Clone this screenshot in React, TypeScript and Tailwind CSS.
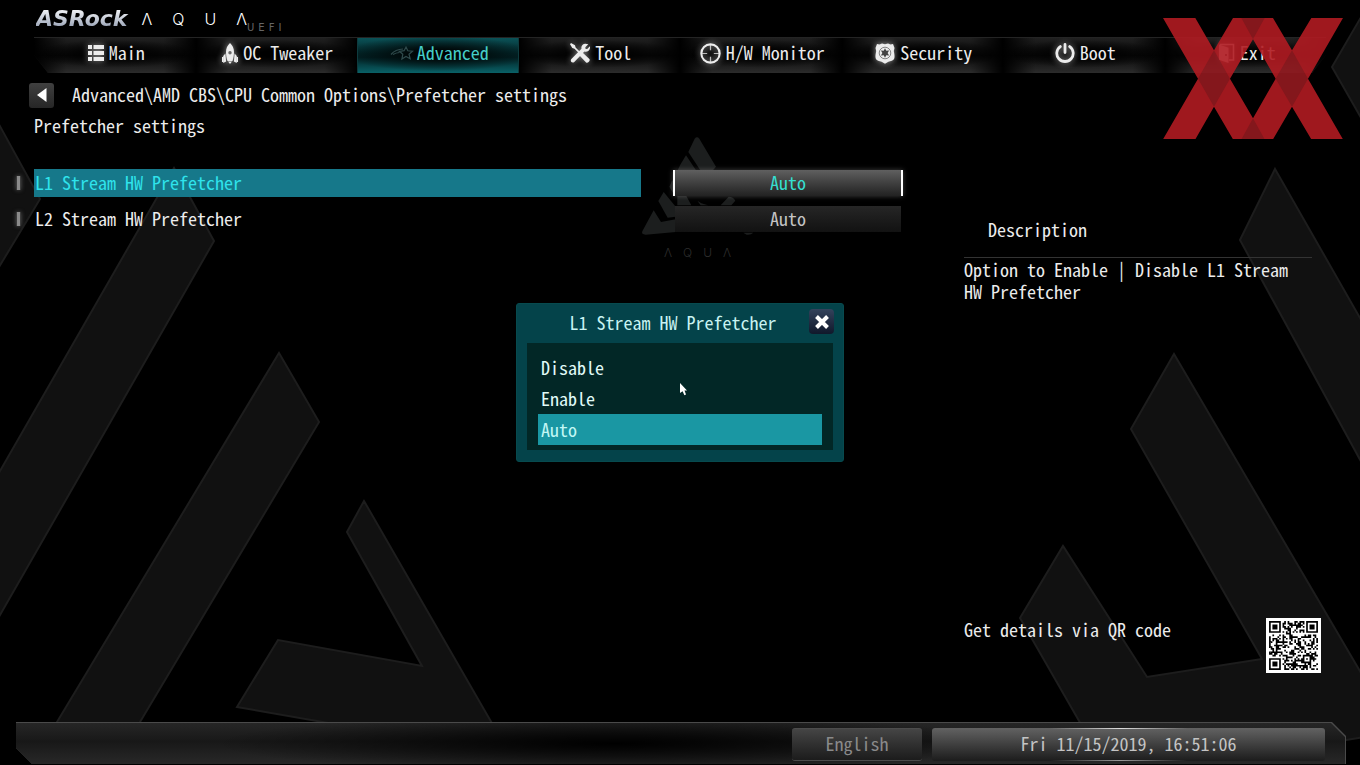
import React from "react";

const ListIcon = () => (
  <svg viewBox="0 0 16 16" className="size-4 fill-current" aria-hidden="true">
    <path d="M0 0h4v4H0zM0 6h4v4H0zM0 12h4v4H0zM5.500 0H16v4H5.500zM5.500 6H16v4H5.500zM5.500 12H16v4H5.500z" />
  </svg>
);

const RocketIcon = () => (
  <svg viewBox="0 0 16 21" className="h-[21px] w-4 fill-current" aria-hidden="true">
    <path
      fillRule="evenodd"
      d="M8 0C10.600 2.400 12 5.600 12 9c0 3-.6 6-1.500 9h-5C4.600 15 4 12 4 9c0-3.400 1.400-6.600 4-9zm0 8a1.700 1.700 0 1 0 0 3.400A1.700 1.700 0 0 0 8 8z"
    />
    <path d="M3.400 10.500L1.200 13v7l2.900-1.500zM12.600 10.500l2.200 2.500v7l-2.900-1.500zM6 18.600h4L8 21z" />
    <path d="M0 14h1.500v5H0zM14.500 14H16v5h-1.500z" />
  </svg>
);

const ShootingStarIcon = () => (
  <svg viewBox="0 0 24 16" className="h-4 w-6 fill-none stroke-[#2f4a4c]" strokeWidth="1.200" aria-hidden="true">
    <path d="M16 2l1.800 3.800 4.700.4-3.500 3 1.200 4.600-4.200-2.400-4.100 2.700.9-4.900-3.300-2.900 4.600-.6z" />
    <path d="M1 9.500C4 6 8 4.200 13 4M3 9.500c2-1.200 4-1.800 6.500-2" />
  </svg>
);

const ToolIcon = () => (
  <svg viewBox="0 0 20 20" className="size-5 fill-current" aria-hidden="true">
    <path d="M1 0l4 2.300.6 2.200 5.200 5.200 1.700-.3 6.900 6.700c1.200 1.600-1.600 4.500-3.300 3.300l-6.600-6.800.3-1.700L4.500 5.700 2.300 5 0 1.200z" />
    <path d="M18.300 1.300l-3 3 .3 1.600 1.600.2 2.700-2.800c.8 4-2.500 6.200-5.500 5.300L4.300 18.900c-2 2-4.800-.7-2.900-2.800L11.500 5.800C10.700 2.300 13.600-.7 18.300 1.300z" />
  </svg>
);

const CrosshairIcon = () => (
  <svg viewBox="0 0 22 22" className="size-[21px] fill-none stroke-current" aria-hidden="true">
    <circle cx="11" cy="11" r="9.600" strokeWidth="2.200" />
    <path d="M11 2v5.500M11 14.500V20M2 11h5.500M14.500 11H20" strokeWidth="1.300" opacity=".75" />
  </svg>
);

const BadgeIcon = () => (
  <svg viewBox="0 0 20 21" className="h-[21px] w-5" aria-hidden="true">
    <path
      className="fill-current"
      d="M2 1l2.500.6L7 .5l3 .8 3-.8 2.500 1.100L18 1l1.500 4-.7 3c.5 3 1 4.500.6 7-.8 2.800-4 3-6 3.700L10 20.800l-3.400-2.100c-2-.7-5.200-.9-6-3.700-.4-2.500.1-4 .6-7l-.7-3z"
    />
    <circle cx="10" cy="10" r="5.800" fill="none" stroke="#777" strokeWidth=".9" />
    <path
      fill="#444"
      d="M10 5.300l1.300 2.400 2.800-.1-1.500 2.400 1.500 2.400-2.800-.1L10 14.700l-1.300-2.400-2.800.1L7.400 10 5.900 7.600l2.800.1z"
    />
  </svg>
);

const PowerIcon = () => (
  <svg
    viewBox="0 0 20 20"
    className="size-5 fill-none stroke-current"
    strokeWidth="2.800"
    strokeLinecap="round"
    aria-hidden="true"
  >
    <path d="M10 1.500v8M5.300 3.600a8.200 8.200 0 1 0 9.400 0" />
  </svg>
);

const DoorIcon = () => (
  <svg viewBox="0 0 17 21" className="h-[21px] w-[17px]" aria-hidden="true">
    <path className="fill-current" d="M1 1.500l9.500 3.200V20L1 16.800z" />
    <path d="M2 1.500h13.500V17H11" className="fill-none stroke-current" strokeWidth="1.600" />
    <circle cx="8" cy="12" r="1" fill="#333" />
  </svg>
);

const tabs = [
  { label: "Main", icon: <ListIcon /> },
  { label: "OC Tweaker", icon: <RocketIcon /> },
  { label: "Advanced", icon: <ShootingStarIcon />, active: true },
  { label: "Tool", icon: <ToolIcon /> },
  { label: "H/W Monitor", icon: <CrosshairIcon /> },
  { label: "Security", icon: <BadgeIcon /> },
  { label: "Boot", icon: <PowerIcon /> },
  { label: "Exit", icon: <DoorIcon /> },
];

const options = [
  { label: "L1 Stream HW Prefetcher", value: "Auto", active: true },
  { label: "L2 Stream HW Prefetcher", value: "Auto", active: false },
];

const choices = ["Disable", "Enable", "Auto"];

function Backdrop() {
  return (
    <svg
      viewBox="0 0 1360 765"
      preserveAspectRatio="xMidYMid slice"
      className="absolute inset-0 size-full"
      aria-hidden="true"
    >
      <g fill="#111" stroke="#1d1d1d" strokeWidth="2">
        <path d="M-4 119L40 199-4 272z" />
        <path d="M174 168l40 73L-4 622V478z" />
        <path d="M279 353l40 69L134 732H51z" />
        <path d="M364 501l133 231H380L237 707l41-67 144 26-75-134z" />
        <path d="M1364 12l-32 55 32 56z" />
        <path d="M1275 169l89 156v142L1240 240z" />
        <path d="M1174 354l190 324v59l-18 3H1090l-70-122 43-72 84 131 115-18-131-230z" />
      </g>
      <g fill="#1c1e1e" transform="translate(620 130) scale(.3333)">
        <path d="M224 26q7-8 14 0l50 84-12 14h-33l-38-58z" />
        <path d="M198 76l32 48h-58l8-18z" />
        <path d="M157 150l6 12v34l-15-26z" />
        <path d="M131 186l36 44v30l-24 3-28-50z" />
        <path d="M101 241l22 35 44-8v38l-90 8q-14 0-10-10z" />
        <path d="M172 196h26l16 30h-42zM232 212l10 14h60l24-26q14 0 20 12l-12 14h-70l-20-6z" />
        <path d="M370 308h30q-8 8-20 6z" />
      </g>
    </svg>
  );
}

function Wordmark({ className }: { className: string }) {
  return (
    <span aria-label="AQUA" className={"flex font-[Inter,sans-serif] leading-none " + className}>
      <span>Λ</span>
      <span>Q</span>
      <span>U</span>
      <span>Λ</span>
    </span>
  );
}

const QR_SIZE = 29;

function ringed(x: number, y: number, cx: number, cy: number, r: number) {
  const d = Math.max(Math.abs(x - cx), Math.abs(y - cy));
  if (d > r) return null;
  return r >= 4 ? d === 3 || d <= 1 : d === 2 || d === 0;
}

function qrModules() {
  const cells: string[] = [];
  let seed = 20191;
  for (let y = 0; y < QR_SIZE; y++) {
    for (let x = 0; x < QR_SIZE; x++) {
      seed = (seed * 1103515245 + 12345) % 2147483648;
      const pattern =
        ringed(x, y, 3, 3, 4) ??
        ringed(x, y, 25, 3, 4) ??
        ringed(x, y, 3, 25, 4) ??
        ringed(x, y, 22, 22, 2) ??
        (x === 6 || y === 6 ? (x + y) % 2 === 0 : seed / 2147483648 > 0.48);
      if (pattern) cells.push(`M${x} ${y}h1v1h-1z`);
    }
  }
  return cells.join("");
}

function QrCode() {
  return (
    <svg viewBox="-1.800 -1.800 32.600 32.600" className="size-[55px] shrink-0 bg-white" role="img" aria-label="QR code">
      <path d={qrModules()} fill="#000" />
    </svg>
  );
}

function Watermark() {
  return (
    <svg
      viewBox="398 54 540 364"
      className="pointer-events-none absolute top-[18px] right-[17px] w-[180px] opacity-90"
      aria-hidden="true"
    >
      <path
        fill="#b11b22"
        d="M398 54h97l56 97 57-97h120l57 97 58-97h95L833 236l105 182h-95l-58-98-57 98H608l-57-98-56 98h-97l105-182zM668 118l-69 118 69 119 68-119z"
        fillRule="evenodd"
      />
      <path
        fill="#931a20"
        d="M551 151l48 85-48 84-48-84zM785 151l48 85-48 84-49-84zM633 54h70l-35 64zM633 418h70l-35-63z"
      />
    </svg>
  );
}

export default function App() {
  return (
    <div className="relative flex min-h-screen flex-col overflow-hidden bg-black font-['Noto_Sans_Mono_CJK_SC','Noto_Sans_Mono_CJK_JP','Liberation_Mono',monospace] text-[18px] leading-6 text-[#ececec]">
      <Backdrop />

      <header className="relative">
        <div className="flex h-[37px] items-start pt-[7px] pl-9">
          <span className="bg-linear-to-b from-white via-[#c5cbd6] to-[#8792a8] bg-clip-text pr-[14px] font-['DejaVu_Sans',sans-serif] text-[22px] leading-6 font-bold text-transparent italic">
            ASRock
          </span>
          <Wordmark className="gap-5 pt-1 text-[16px] font-light text-white" />
          <span
            aria-label="UEFI"
            className="flex gap-1 pt-4 font-['DejaVu_Sans',sans-serif] text-[10px] leading-none text-[#666]"
          >
            <span>U</span>
            <span>E</span>
            <span>F</span>
            <span>I</span>
          </span>
        </div>
        <nav className="mr-[34px] ml-[34px] grid h-9 grid-cols-8 border-t border-[#242424] [clip-path:polygon(0_0,100%_0,100%_50%,calc(100%-14px)_100%,14px_100%,0_50%)]">
          {tabs.map((tab) => (
            <button
              key={tab.label}
              type="button"
              className={
                tab.active
                  ? "flex items-center justify-center gap-[3px] border-x border-[#0e3b3e] bg-[radial-gradient(ellipse_60%_50%_at_50%_45%,#000_10%,transparent),linear-gradient(#0b5257,#02272a_45%,#022225_55%,#0a6167)] pb-[5px] pl-[3px] text-[#45cdc9]"
                  : "flex items-center justify-center gap-[5px] bg-[radial-gradient(ellipse_50%_40%_at_50%_45%,#000_20%,transparent),linear-gradient(to_right,#000,transparent_20%,transparent_80%,#000),linear-gradient(#202020,#080808_50%,#2c2c2c)] pb-[5px] pl-[3px] text-[#ececec]"
              }
            >
              <span className={tab.active ? "" : "drop-shadow-[0_0_3px_rgba(255,255,255,0.6)]"}>{tab.icon}</span>
              <span className="pb-[3px]">{tab.label}</span>
            </button>
          ))}
        </nav>
      </header>

      <main className="relative flex flex-1">
        <section className="min-w-0 flex-1 pt-[9px]">
          <div className="flex items-center gap-[18px] pl-[29px]">
            <button
              type="button"
              aria-label="Back"
              className="flex size-[25px] items-center justify-center rounded-[3px] bg-linear-to-b from-[#404040] to-[#262626]"
            >
              <svg viewBox="0 0 10 14" className="h-[14px] w-[10px] fill-white" aria-hidden="true">
                <path d="M9.500 0v14L0 7z" />
              </svg>
            </button>
            <h1 className="pb-[2px]">Advanced\AMD CBS\CPU Common Options\Prefetcher settings</h1>
          </div>
          <h2 className="mt-[5px] pl-[34px]">Prefetcher settings</h2>

          <ul className="mt-[32px] flex flex-col gap-2 pr-[61px] pl-4">
            {options.map((option) => (
              <li key={option.label} className="flex h-7 items-center">
                <span className="mr-[13px] h-[14px] w-[5px] border-x border-[#3a3a3a] bg-[#8a8a8a] shadow-[0_0_4px_#555]" />
                <span
                  className={
                    option.active
                      ? "h-7 flex-1 bg-[#16788a] pl-px leading-[26px] text-[#2fe3ec]"
                      : "h-7 flex-1 pl-px leading-[26px]"
                  }
                >
                  {option.label}
                </span>
                <button
                  type="button"
                  aria-label={option.label}
                  className={
                    option.active
                      ? "ml-8 h-[26px] w-[230px] border-x-2 border-white bg-linear-to-b from-[#606060] to-[#222] pb-[2px] text-[#36dfd0] shadow-[0_0_5px_rgba(255,255,255,0.25)]"
                      : "ml-8 h-[26px] w-[230px] border-x-2 border-transparent bg-linear-to-b from-[#262626] to-[#121212] bg-clip-padding pb-[2px] text-[#c4c4c4]"
                  }
                >
                  {option.value}
                </button>
              </li>
            ))}
          </ul>
          <div className="mt-[14px] ml-[664px] flex">
            <Wordmark className="gap-[11px] text-[12px] font-light text-[#2c2c2c]" />
          </div>
        </section>

        <aside className="flex w-[396px] flex-col pt-36">
          <h2 className="pl-6">Description</h2>
          <div className="mt-4 mr-12 border-t border-[#333] leading-[22px]">
            <p className="pr-2">Option to Enable | Disable L1 Stream HW Prefetcher</p>
          </div>
          <div className="mt-auto mr-[39px] mb-[49px] flex items-start justify-between">
            <p className="leading-[22px]">Get details via QR code</p>
            <QrCode />
          </div>
        </aside>
      </main>

      <footer className="relative mr-[14px] mb-px ml-4 bg-[#4a4a4a] pt-px pr-px [clip-path:polygon(0_0,calc(100%-14px)_0,100%_14px,100%_100%,16px_100%,0_26px)]">
        <div className="flex h-[41px] items-start justify-end gap-[10px] bg-[radial-gradient(ellipse_30%_70%_at_45%_50%,#000,transparent),linear-gradient(#262626,#181818_45%,#282828)] pt-[5px] pr-5 [clip-path:polygon(0_0,calc(100%-14px)_0,100%_14px,100%_100%,16px_100%,0_26px)]">
          <button
            type="button"
            className="h-[33px] w-[130px] rounded-[3px] border-y border-[#4c4c4c] bg-linear-to-b from-[#454545] to-[#1c1c1c] pb-[3px] text-[#8a8a8a]"
          >
            English
          </button>
          <button
            type="button"
            className="h-[33px] w-[393px] rounded-[3px] bg-[linear-gradient(to_right,transparent_30%,#ddd_48%,transparent_65%),linear-gradient(to_right,transparent_30%,#999_48%,transparent_65%),linear-gradient(#626262,#1c1c1c)] bg-size-[100%_1px,100%_1px,100%_100%] bg-position-[top,bottom,center] bg-no-repeat pb-[3px] text-[#c4c4c4]"
          >
            Fri 11/15/2019, 16:51:06
          </button>
        </div>
      </footer>

      <Watermark />

      <div className="absolute inset-0 flex items-center justify-center">
        <div
          role="dialog"
          aria-labelledby="dialog-title"
          className="w-[328px] rounded-[3px] border border-[#074a4e] bg-[#04434a] px-[10px] pb-[11px]"
        >
          <div className="relative flex h-[39px] items-center justify-center">
            <h2 id="dialog-title" className="pr-[14px] pb-1 text-[#c9f3f2]">
              L1 Stream HW Prefetcher
            </h2>
            <button
              type="button"
              aria-label="Close"
              className="absolute top-[5px] -right-px flex size-[25px] items-center justify-center rounded-[4px] bg-linear-to-b from-[#34435c] to-[#10182b]"
            >
              <svg viewBox="0 0 14 14" className="size-[14px] fill-none stroke-white" strokeWidth="4" aria-hidden="true">
                <path d="M1.500 1.500l11 11M12.500 1.500l-11 11" />
              </svg>
            </button>
          </div>
          <ul className="bg-[#022726] px-[11px] pt-[9px] pb-[5px]">
            {choices.map((choice) => (
              <li key={choice}>
                <button
                  type="button"
                  className={
                    choice === "Auto"
                      ? "h-[31px] w-full bg-[#1a97a3] pb-[2px] pl-[3px] text-left text-[#c2f7f5]"
                      : "h-[31px] w-full pb-[2px] pl-[3px] text-left text-[#e0fbf8]"
                  }
                >
                  {choice}
                </button>
              </li>
            ))}
          </ul>
        </div>
        <svg viewBox="0 0 7 13" className="absolute top-1/2 left-1/2 h-[13px] w-[7px] fill-white" aria-hidden="true">
          <path d="M0 0l7 7.500H4.500L6 11.500l-1.600.8-1.800-4L0 10z" />
        </svg>
      </div>
    </div>
  );
}
